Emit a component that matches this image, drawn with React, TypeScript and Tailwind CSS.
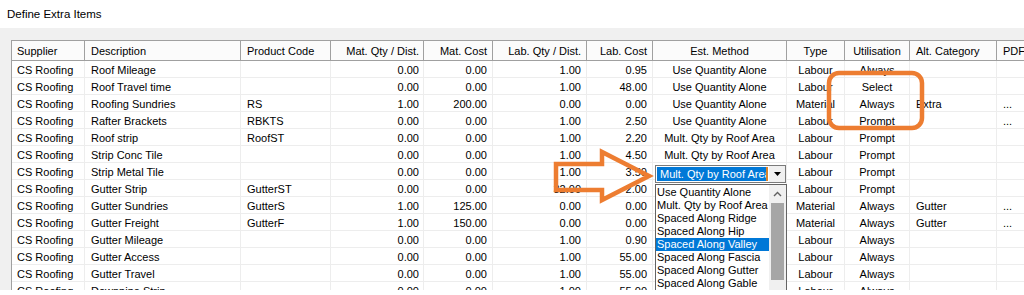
import React from 'react';

interface Column {
  title: string;
  cls: string;
}

// widths taken from the header separators
const COLUMNS: Column[] = [
  { title: 'Supplier', cls: 'w-[73px] pl-[5px] text-left' },
  { title: 'Description', cls: 'w-[156px] pl-[6px] text-left' },
  { title: 'Product Code', cls: 'w-[90px] pl-[6px] text-left' },
  { title: 'Mat. Qty / Dist.', cls: 'w-[93px] pr-[4px] text-right' },
  { title: 'Mat. Cost', cls: 'w-[69px] pr-[5px] text-right' },
  { title: 'Lab. Qty / Dist.', cls: 'w-[94px] pr-[5px] text-right' },
  { title: 'Lab. Cost', cls: 'w-[66px] pr-[5px] text-right' },
  { title: 'Est. Method', cls: 'w-[134px] text-center' },
  { title: 'Type', cls: 'w-[58px] text-center' },
  { title: 'Utilisation', cls: 'w-[65px] text-center' },
  { title: 'Alt. Category', cls: 'w-[87px] pl-[6px] text-left' },
  { title: 'PDF', cls: 'w-[60px] pl-[6px] text-left' },
];

const ROWS: string[][] = [
  ['CS Roofing', 'Roof Mileage', '', '0.00', '0.00', '1.00', '0.95', 'Use Quantity Alone', 'Labour', 'Always', '', ''],
  ['CS Roofing', 'Roof Travel time', '', '0.00', '0.00', '1.00', '48.00', 'Use Quantity Alone', 'Labour', 'Select', '', ''],
  ['CS Roofing', 'Roofing Sundries', 'RS', '1.00', '200.00', '0.00', '0.00', 'Use Quantity Alone', 'Material', 'Always', 'Extra', '...'],
  ['CS Roofing', 'Rafter Brackets', 'RBKTS', '0.00', '0.00', '1.00', '2.50', 'Use Quantity Alone', 'Labour', 'Prompt', '', '...'],
  ['CS Roofing', 'Roof strip', 'RoofST', '0.00', '0.00', '1.00', '2.20', 'Mult. Qty by Roof Area', 'Labour', 'Prompt', '', ''],
  ['CS Roofing', 'Strip Conc Tile', '', '0.00', '0.00', '1.00', '4.50', 'Mult. Qty by Roof Area', 'Labour', 'Prompt', '', ''],
  ['CS Roofing', 'Strip Metal Tile', '', '0.00', '0.00', '1.00', '3.50', '', 'Labour', 'Prompt', '', ''],
  ['CS Roofing', 'Gutter Strip', 'GutterST', '0.00', '0.00', '32.00', '2.00', '', 'Labour', 'Prompt', '', ''],
  ['CS Roofing', 'Gutter Sundries', 'GutterS', '1.00', '125.00', '0.00', '0.00', '', 'Material', 'Always', 'Gutter', '...'],
  ['CS Roofing', 'Gutter Freight', 'GutterF', '1.00', '150.00', '0.00', '0.00', '', 'Material', 'Always', 'Gutter', '...'],
  ['CS Roofing', 'Gutter Mileage', '', '0.00', '0.00', '1.00', '0.90', '', 'Labour', 'Always', '', ''],
  ['CS Roofing', 'Gutter Access', '', '0.00', '0.00', '1.00', '55.00', '', 'Labour', 'Always', '', ''],
  ['CS Roofing', 'Gutter Travel', '', '0.00', '0.00', '1.00', '55.00', '', 'Labour', 'Always', '', ''],
  ['CS Roofing', 'Downpipe Strip', '', '0.00', '0.00', '1.00', '55.00', '', 'Labour', 'Always', '', ''],
];

const METHODS = [
  'Use Quantity Alone',
  'Mult. Qty by Roof Area',
  'Spaced Along Ridge',
  'Spaced Along Hip',
  'Spaced Along Valley',
  'Spaced Along Fascia',
  'Spaced Along Gutter',
  'Spaced Along Gable',
];

const EDIT_ROW = 6;
const METHOD_COL = 7;

const MethodEditor: React.FC = () => (
  <>
    <div className="absolute left-[2px] top-[2px] z-20 flex h-[18px] w-[131px] border border-[#7a7a7a] bg-white">
      <div className="relative ml-[1px] mt-[1px] h-[14px] w-[111px] overflow-hidden bg-[#0078d7] pl-[3px] text-left leading-[14px] text-white">
        Mult. Qty by Roof Area
        <span className="absolute right-0 top-0 h-full w-[2px] bg-[#d9822b]" />
      </div>
      <div className="ml-auto flex w-[16px] items-center justify-center bg-[#f0f0f0]">
        <svg width="7" height="4" viewBox="0 0 7 4">
          <polygon points="0,0 7,0 3.5,4" fill="#000" />
        </svg>
      </div>
    </div>
    <div className="absolute left-[2px] top-[21px] z-20 flex h-[120px] w-[132px] border border-[#646464] bg-white text-left">
      <div className="flex-1 pt-[1px]">
        {METHODS.map((m, i) => (
          <div
            key={m}
            className={
              i === 4
                ? 'h-[13px] whitespace-nowrap bg-[#0078d7] pl-[1px] leading-[13px] text-white'
                : 'h-[13px] whitespace-nowrap pl-[1px] leading-[13px]'
            }
          >
            {m}
          </div>
        ))}
      </div>
      <div className="flex w-[17px] shrink-0 flex-col bg-[#f0f0f0]">
        <div className="flex h-[17px] items-center justify-center">
          <svg width="9" height="6" viewBox="0 0 9 6">
            <path d="M1 5 L4.5 1.5 L8 5" fill="none" stroke="#606060" strokeWidth="1.4" />
          </svg>
        </div>
        <div className="mx-[2px] mt-[1px] h-[77px] bg-[#a6a6a6]" />
      </div>
    </div>
  </>
);

const Annotations: React.FC = () => (
  <svg className="pointer-events-none absolute left-0 top-0 z-30" width="1024" height="295" viewBox="0 0 1024 295">
    <rect x="829" y="73" width="93" height="55" rx="10" fill="none" stroke="#ED7D31" strokeWidth="4.5" />
    <polygon
      points="556,164 602,164 602,152 649,176 602,200 602,190 556,190"
      fill="none"
      stroke="#ED7D31"
      strokeWidth="4.5"
      strokeLinejoin="miter"
    />
  </svg>
);

export default function App() {
  return (
    <div className="relative h-[295px] w-[1024px] overflow-hidden bg-white font-['Liberation_Sans',Arial,sans-serif] text-[11px] text-black">
      <div className="h-[28px] pl-[7px] pt-[8px] text-[11.5px] leading-[13px]">Define Extra Items</div>
      <div className="h-[262px] overflow-hidden bg-[#f0f0f0] pl-[11px] pt-[12px]">
        <div className="w-max border-l border-t border-[#a0a0a0] bg-white">
          <div className="flex h-[20px]">
            {COLUMNS.map((c) => (
              <div
                key={c.title}
                className={`${c.cls} shrink-0 overflow-hidden whitespace-nowrap border-b border-r border-[#a0a0a0] bg-[#fbfbfb] pt-[2px] leading-[17px]`}
              >
                {c.title}
              </div>
            ))}
          </div>
          {ROWS.map((row, r) => (
            <div key={r} className="flex h-[17px]">
              {row.map((val, ci) => (
                <div
                  key={ci}
                  className={`${COLUMNS[ci].cls} relative shrink-0 whitespace-nowrap border-b border-r border-[#ededed] pt-[2px] leading-[15px]`}
                >
                  {val}
                  {r === EDIT_ROW && ci === METHOD_COL && <MethodEditor />}
                </div>
              ))}
            </div>
          ))}
        </div>
      </div>
      <Annotations />
    </div>
  );
}
